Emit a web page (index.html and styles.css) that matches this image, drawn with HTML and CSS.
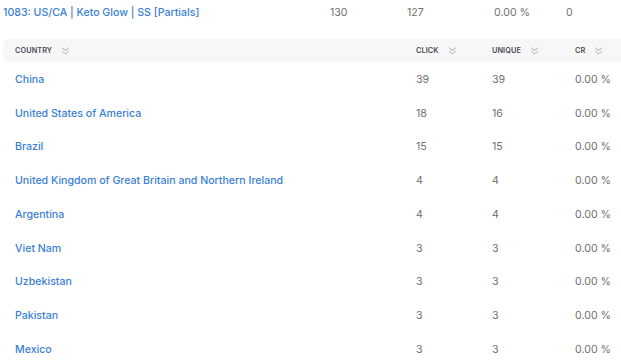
FILE: index.html
```html
<!DOCTYPE html>
<html>
<head>
<meta charset="utf-8">
<link rel="stylesheet" href="styles.css">
</head>
<body>
<div class="page">
  <div class="summary">
    <a class="link">1083: US/CA | Keto Glow | SS [Partials]</a>
    <span class="num s1">130</span>
    <span class="num s2">127</span>
    <span class="num s3">0.00 %</span>
    <span class="num s4">0</span>
  </div>
  <div class="table">
    <div class="row head">
      <div class="cell">COUNTRY <svg class="sort" viewBox="0 0 8 8"><path d="M1 1.5 L4 4 L7 1.5 M1 4.5 L4 7 L7 4.5"/></svg></div>
      <div class="cell">CLICK <svg class="sort" viewBox="0 0 8 8"><path d="M1 1.5 L4 4 L7 1.5 M1 4.5 L4 7 L7 4.5"/></svg></div>
      <div class="cell">UNIQUE <svg class="sort" viewBox="0 0 8 8"><path d="M1 1.5 L4 4 L7 1.5 M1 4.5 L4 7 L7 4.5"/></svg></div>
      <div class="cell">CR <svg class="sort" viewBox="0 0 8 8"><path d="M1 1.5 L4 4 L7 1.5 M1 4.5 L4 7 L7 4.5"/></svg></div>
    </div>
    <div class="row"><div class="cell link">China</div><div class="cell num">39</div><div class="cell num">39</div><div class="cell num">0.00 %</div></div>
    <div class="row"><div class="cell link">United States of America</div><div class="cell num">18</div><div class="cell num">16</div><div class="cell num">0.00 %</div></div>
    <div class="row"><div class="cell link">Brazil</div><div class="cell num">15</div><div class="cell num">15</div><div class="cell num">0.00 %</div></div>
    <div class="row"><div class="cell link">United Kingdom of Great Britain and Northern Ireland</div><div class="cell num">4</div><div class="cell num">4</div><div class="cell num">0.00 %</div></div>
    <div class="row"><div class="cell link">Argentina</div><div class="cell num">4</div><div class="cell num">4</div><div class="cell num">0.00 %</div></div>
    <div class="row"><div class="cell link">Viet Nam</div><div class="cell num">3</div><div class="cell num">3</div><div class="cell num">0.00 %</div></div>
    <div class="row"><div class="cell link">Uzbekistan</div><div class="cell num">3</div><div class="cell num">3</div><div class="cell num">0.00 %</div></div>
    <div class="row"><div class="cell link">Pakistan</div><div class="cell num">3</div><div class="cell num">3</div><div class="cell num">0.00 %</div></div>
    <div class="row"><div class="cell link">Mexico</div><div class="cell num">3</div><div class="cell num">3</div><div class="cell num">0.00 %</div></div>
  </div>
</div>
</body>
</html>
```
FILE: styles.css
```css
html, body {
  margin: 0;
  padding: 0;
  background: #ffffff;
  overflow: hidden;
}
body {
  font-family: Inter, "Noto Sans", sans-serif;
  font-size: 10.6px;
  width: 621px;
  height: 362px;
}
.page {
  padding-left: 3px;
}
.summary {
  display: grid;
  grid-template-columns: 327px 77px 87px 72px 1fr;
  height: 24px;
  align-items: center;
  margin-bottom: 15px;
}
.link {
  color: #3a80d6;
  font-weight: 500;
}
.num {
  color: #707070;
}
.table {
  width: 640px;
}
.row {
  display: grid;
  grid-template-columns: 401px 76px 83px 1fr;
  height: 33.75px;
  align-items: center;
  padding-top: 1px;
  box-sizing: border-box;
}
.row.head {
  height: 23px;
  padding-top: 0;
  background: #f7f7f7;
  border-radius: 6px 0 0 6px;
}
.cell {
  padding-left: 12px;
  white-space: nowrap;
}
.head .cell {
  font-size: 7.3px;
  font-weight: 600;
  color: #4a4a55;
  letter-spacing: 0.1px;
  display: flex;
  align-items: center;
}
.sort {
  width: 9px;
  height: 9px;
  margin-left: 9px;
  fill: none;
  stroke: #bdbdbd;
  stroke-width: 0.9;
}
```
